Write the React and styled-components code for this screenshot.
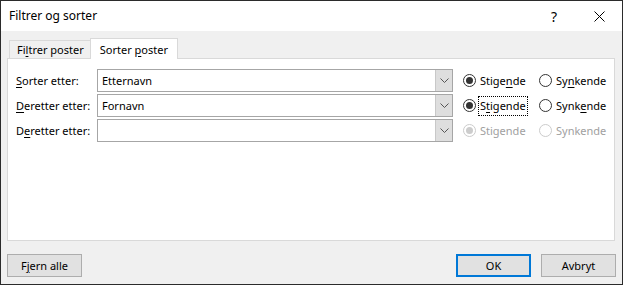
import React from 'react'
import styled, { createGlobalStyle } from 'styled-components'

const Global = createGlobalStyle`
    html, body { margin: 0; padding: 0; background: #fff; }
    body { font-family: 'Noto Sans', 'Liberation Sans', sans-serif; font-size: 11px; color: #000; }
    u { text-underline-offset: 2px; }
`

const rows = [
    { label: ['', 'S', 'orter etter:'], value: 'Etternavn', asc: ['Stige', 'n', 'de'], desc: ['Sy', 'n', 'kende'], focus: false },
    { label: ['', 'D', 'eretter etter:'], value: 'Fornavn', asc: ['S', 't', 'igende'], desc: ['Synk', 'e', 'nde'], focus: true },
    { label: ['D', 'e', 'retter etter:'], value: '', asc: null, desc: null, disabled: true },
]

// [before, underlined, after]
const Acc = ({ parts }) => (
    <span>{parts[0]}<u>{parts[1]}</u>{parts[2]}</span>
)

const App = () => {
    return (
        <>
            <Global />
            <Window>
                <TitleBar>
                    <Title>Filtrer og sorter</Title>
                    <TitleBtn>?</TitleBtn>
                    <TitleBtn>
                        <svg width="11" height="11" viewBox="0 0 11 11">
                            <path d="M0.5 0.5 L10.5 10.5 M10.5 0.5 L0.5 10.5" stroke="#000" strokeWidth="1" fill="none" />
                        </svg>
                    </TitleBtn>
                </TitleBar>
                <Body>
                    <TabStrip>
                        <Tab><Acc parts={['Fi', 'l', 'trer poster']} /></Tab>
                        <Tab $active><Acc parts={['Sorter ', 'p', 'oster']} /></Tab>
                    </TabStrip>
                    <Panel>
                        {rows.map((r, i) => (
                            <Row key={i}>
                                <Label><Acc parts={r.label} /></Label>
                                <Combo>
                                    <ComboText>{r.value}</ComboText>
                                    <DropBtn>
                                        <svg width="9" height="5" viewBox="0 0 9 5">
                                            <path d="M0.5 0.5 L4.5 4.5 L8.5 0.5" stroke="#555" strokeWidth="1" fill="none" />
                                        </svg>
                                    </DropBtn>
                                </Combo>
                                <Radio $w={76} $disabled={r.disabled}>
                                    <Circle $checked $disabled={r.disabled} />
                                    <RadioText $focus={r.focus}>
                                        {r.asc ? <Acc parts={r.asc} /> : 'Stigende'}
                                    </RadioText>
                                </Radio>
                                <Radio $disabled={r.disabled}>
                                    <Circle $disabled={r.disabled} />
                                    <RadioText>
                                        {r.desc ? <Acc parts={r.desc} /> : 'Synkende'}
                                    </RadioText>
                                </Radio>
                            </Row>
                        ))}
                    </Panel>
                    <Footer>
                        <Button><Acc parts={['F', 'j', 'ern alle']} /></Button>
                        <Right>
                            <Button $default>OK</Button>
                            <Button>Avbryt</Button>
                        </Right>
                    </Footer>
                </Body>
            </Window>
        </>
    )
}

const Window = styled.div`
    width: 623px; height: 285px; box-sizing: border-box;
    border: 1px solid #2b2b2b;
    display: flex; flex-direction: column;
    background: #f0f0f0;
`
const TitleBar = styled.div`
    height: 30px; flex: none;
    background: #fff;
    display: flex; align-items: center;
    padding-left: 8px;
`
const Title = styled.div`
    flex: 1;
    font-size: 12px;
    margin-top: -1px;
`
const TitleBtn = styled.div`
    width: 46px; height: 30px;
    display: flex; align-items: center; justify-content: center;
    font-size: 14px;
    &:last-child { width: 45px; }
`
const Body = styled.div`
    flex: 1;
    display: flex; flex-direction: column;
    padding: 7px 7px 7px 6px;
`
const TabStrip = styled.div`
    height: 20px; flex: none;
    display: flex; align-items: flex-end;
    padding-left: 2px;
`
const Tab = styled.div`
    box-sizing: border-box;
    height: ${p => p.$active ? 21 : 18}px;
    margin-bottom: ${p => p.$active ? -1 : 0}px;
    position: relative; z-index: ${p => p.$active ? 1 : 0};
    padding: ${p => p.$active ? '1px 9px 0 9px' : '0 6px 0 7px'};
    margin-left: ${p => p.$active ? -1 : 0}px;
    border: 1px solid #d9d9d9; border-bottom: none;
    background: ${p => p.$active ? '#fff' : '#f0f0f0'};
    display: flex; align-items: center;
    white-space: pre;
`
const Panel = styled.div`
    height: 183px; box-sizing: border-box; flex: none;
    border: 1px solid #d9d9d9;
    background: #fff;
    padding: 10px 8px 0 8px;
    display: flex; flex-direction: column; gap: 2px;
`
const Row = styled.div`
    display: flex; align-items: center;
    height: 23px;
`
const Label = styled.div`
    width: 81px; flex: none;
    white-space: nowrap;
`
const Combo = styled.div`
    width: 356px; height: 23px; box-sizing: border-box; flex: none;
    border: 1px solid #a6a6a6;
    background: #fff;
    display: flex;
`
const ComboText = styled.div`
    flex: 1;
    padding-left: 4px;
    display: flex; align-items: center;
`
const DropBtn = styled.div`
    width: 16px;
    background: #dedede;
    border-left: 1px solid #c8c8c8;
    display: flex; align-items: center; justify-content: center;
`
const Radio = styled.div`
    width: ${p => p.$w ? p.$w + 'px' : 'auto'};
    flex: none;
    display: flex; align-items: center;
    margin-left: ${p => p.$w ? 10 : 0}px;
    color: ${p => p.$disabled ? '#a0a0a0' : '#000'};
`
const Circle = styled.span`
    width: 13px; height: 13px; box-sizing: border-box; flex: none;
    border: 1px solid ${p => p.$disabled ? '#cccccc' : '#333'};
    border-radius: 50%;
    display: flex; align-items: center; justify-content: center;
    margin-right: 3px;
    &::after {
        content: '';
        display: ${p => p.$checked ? 'block' : 'none'};
        width: 7px; height: 7px; border-radius: 50%;
        background: ${p => p.$disabled ? '#cccccc' : '#333'};
    }
`
const RadioText = styled.span`
    padding: 1px 1px 2px 1px;
    outline: ${p => p.$focus ? '1px dotted #000' : 'none'};
    white-space: nowrap;
`
const Footer = styled.div`
    margin-top: 13px;
    display: flex; justify-content: space-between;
`
const Right = styled.div`
    display: flex; gap: 10px;
    margin-right: -1px;
`
const Button = styled.div`
    width: 75px; height: 23px; box-sizing: border-box;
    background: #e1e1e1;
    border: ${p => p.$default ? '2px solid #0078d7' : '1px solid #adadad'};
    display: flex; align-items: center; justify-content: center;
`

export default App
